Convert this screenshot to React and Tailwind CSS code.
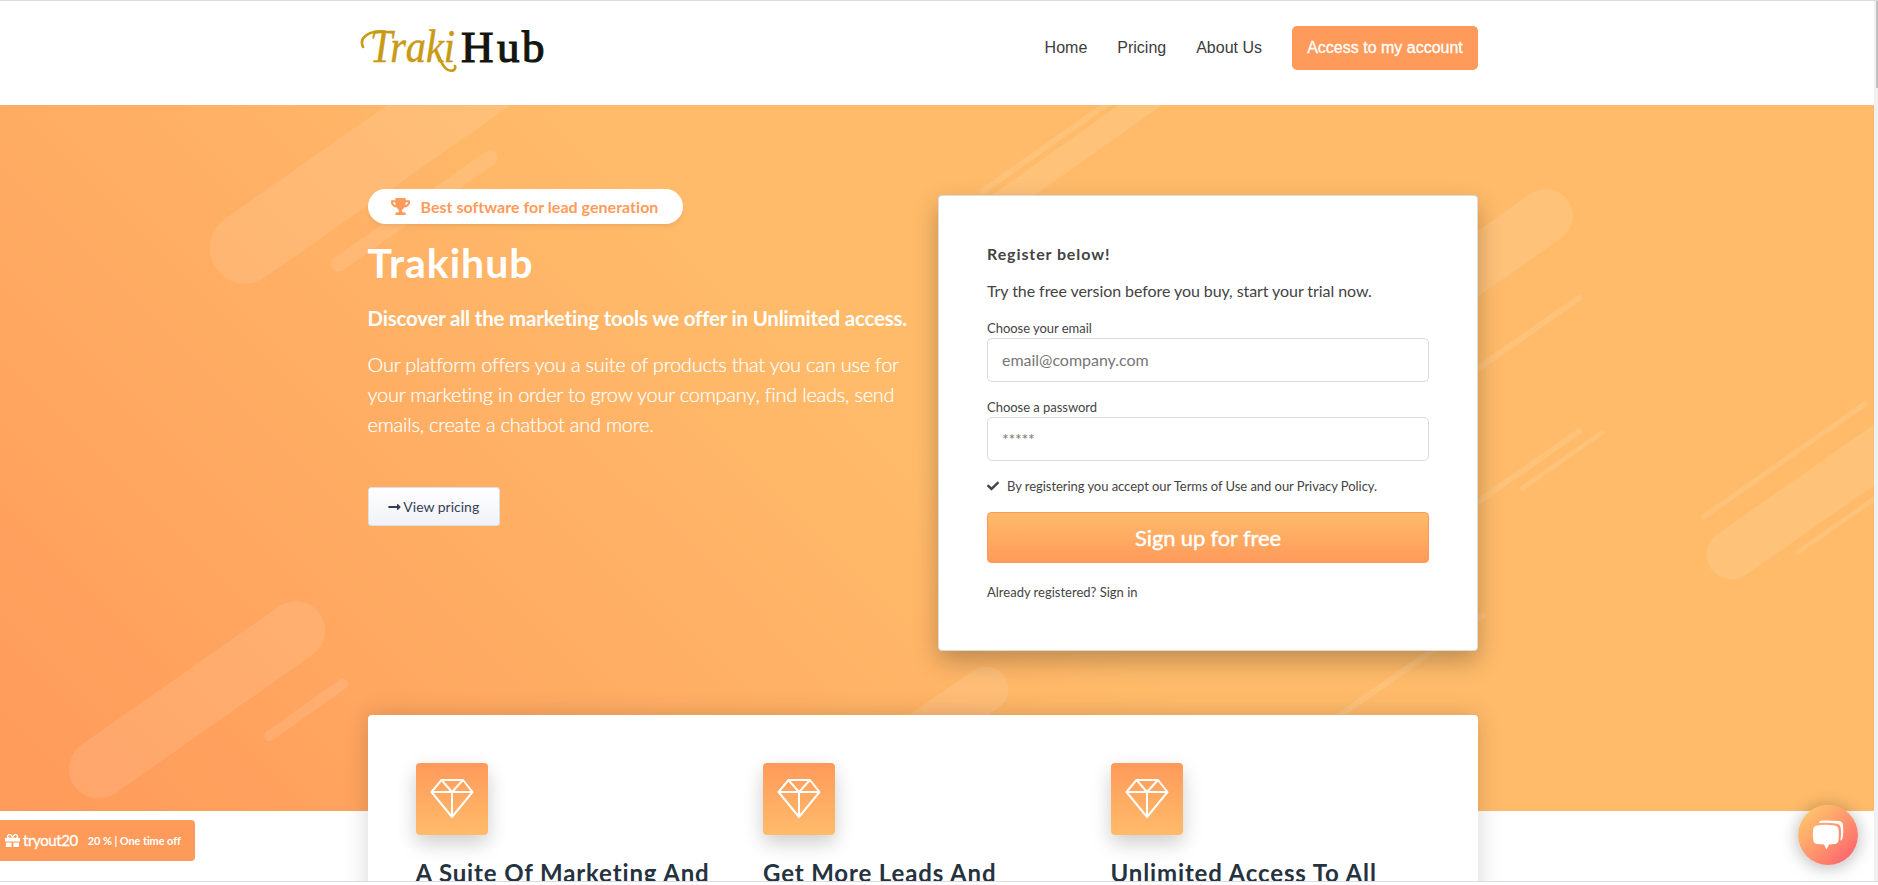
import { FaCheck, FaGift, FaLongArrowAltRight, FaTrophy } from "react-icons/fa"

const links = ["Home", "Pricing", "About Us"]

const features = ["A Suite Of Marketing And", "Get More Leads And", "Unlimited Access To All"]

// x1, y1, x2, y2, thickness
const stripes = [
    [245, 143, 655, -144, 71],
    [338.5, 159, 490, 53, 15],
    [98.5, 664, 295.7, 525.7, 59],
    [269.5, 631, 342.7, 579, 10.5],
    [983, 86, 1128, -16, 6],
    [960, 128, 1180, -28, 25],
    [1300, 283, 1546, 111, 54],
    [1400, 318, 1579, 193, 6],
    [1400, 451, 1579, 326.5, 6],
    [1522.5, 383, 1602, 327.5, 5],
    [1703.5, 412, 1865, 298.7, 5.5],
    [1731.5, 449.5, 1920, 318, 50],
    [1798, 447, 1920, 362, 5],
    [1300, 638, 1483, 510.5, 6],
    [860, 672, 986, 584, 45],
]

function Logo() {
    return (
        <svg width="194" height="76" viewBox="0 -12 194 76" className="-ml-[9px] mt-[8px]">
            <text
                x="11"
                y="41"
                textLength="85"
                lengthAdjust="spacingAndGlyphs"
                fontFamily="'Liberation Serif', serif"
                fontStyle="italic"
                fontSize="47"
                fill="#c99a14"
                stroke="#c99a14"
                strokeWidth="0.5"
            >
                Traki
            </text>
            <path
                d="M26 10.500C13 9 -1 15 4 26M80 36C84 46 89 52 95 49Q97 47 96 45"
                fill="none"
                stroke="#c99a14"
                strokeWidth="2.6"
                strokeLinecap="round"
            />
            <text
                y="41"
                fontFamily="'Liberation Serif', serif"
                fontSize="45"
                fill="#14150f"
                stroke="#14150f"
                strokeWidth="1.2"
            >
                <tspan x="102">H</tspan>
                <tspan x="138">u</tspan>
                <tspan x="163">b</tspan>
            </text>
        </svg>
    )
}

function Header() {
    return (
        <header className="flex h-[104px] shrink-0 items-start justify-between bg-white pl-[368px] pr-[396px]">
            <Logo />
            <nav className="mt-[25px] flex items-center gap-[30px] font-['Liberation_Sans',sans-serif] text-base text-[#3c3c3c]">
                {links.map((link) => (
                    <a key={link}>{link}</a>
                ))}
                <a className="flex h-[44px] w-[186px] items-center justify-center whitespace-nowrap rounded-[5px] bg-[#ff9b5a] text-white [-webkit-text-stroke:0.3px_white]">
                    Access to my account
                </a>
            </nav>
        </header>
    )
}

function Stripes() {
    return (
        <svg className="absolute inset-0" width="1874" height="706" viewBox="0 0 1874 706">
            {stripes.map(([x1, y1, x2, y2, w], i) => (
                <line
                    key={i}
                    x1={x1}
                    y1={y1}
                    x2={x2}
                    y2={y2}
                    stroke="#fff"
                    strokeOpacity="0.1"
                    strokeWidth={w}
                    strokeLinecap="round"
                />
            ))}
        </svg>
    )
}

function Intro() {
    return (
        <div className="w-[570.5px] pt-[84px] text-white">
            <div className="flex h-[35px] w-[315px] items-center rounded-[18px] bg-white pl-[23px] text-base font-bold tracking-[0.03px] text-[#ff9b5a] shadow-md shadow-black/5">
                <FaTrophy className="mr-[11px] h-[17px] w-[19px]" />
                <span className="whitespace-nowrap">Best software for lead generation</span>
            </div>
            <h1 className="mt-[14px] text-[41px] font-bold leading-[50px] tracking-[1px]">Trakihub</h1>
            <h2 className="mt-[15px] whitespace-nowrap text-[20.5px] font-bold leading-[30px] tracking-[-0.21px]">
                Discover all the marketing tools we offer in Unlimited access.
            </h2>
            <p className="mt-[16px] whitespace-nowrap text-[20px] font-light leading-[30px] tracking-[-0.24px] [-webkit-text-stroke:0.2px_white]">
                Our platform offers you a suite of products that you can use for
                <br />
                your marketing in order to grow your company, find leads, send
                <br />
                emails, create a chatbot and more.
            </p>
            <button className="mt-[48px] flex h-[39px] w-[132.5px] items-center justify-center rounded-[3px] border border-[#dcdfe6] bg-linear-to-b from-white to-[#f1f2f7] text-[14px] text-[#343f56]">
                <FaLongArrowAltRight className="mr-[2px] h-[14px] w-[13px]" />
                View pricing
            </button>
        </div>
    )
}

function Register() {
    return (
        <form className="mt-[90px] h-[456px] w-[540px] rounded-[4px] border border-[#dcdcdc] bg-white px-[48px] pt-[46px] text-[#444] shadow-[0_10px_24px_rgba(0,0,0,0.25)]">
            <h3 className="text-base font-bold leading-[24px] tracking-[0.9px]">Register below!</h3>
            <p className="mt-[13px] text-base leading-[24px] tracking-[-0.07px]">
                Try the free version before you buy, start your trial now.
            </p>
            <label className="mt-[16px] block text-[13px] leading-[18px] tracking-[-0.03px]">Choose your email</label>
            <input
                className="mt-px block h-[44px] w-[442px] rounded-[5px] border border-[#dcdcdc] px-[14px] pb-[2px] text-base tracking-[-0.03px] placeholder:text-[#777]"
                placeholder="email@company.com"
            />
            <label className="mt-[16px] block text-[13px] leading-[18px] tracking-[-0.03px]">Choose a password</label>
            <input
                className="mt-px block h-[44px] w-[442px] rounded-[5px] border border-[#dcdcdc] px-[14px] pb-[2px] text-base tracking-[-0.3px] placeholder:text-[#777]"
                placeholder="*****"
            />
            <p className="mt-[16px] flex items-center text-[13px] leading-[18px] tracking-[-0.05px]">
                <FaCheck className="mr-[8px] h-[12px] w-[12px]" />
                By registering you accept our Terms of Use and our Privacy Policy.
            </p>
            <button className="mt-[17px] h-[51px] w-[442px] rounded-[4px] border border-[#ff9b5a] bg-linear-to-b from-[#ffbb6a] to-[#ff9a5a] text-[22px] tracking-[-0.15px] text-white [-webkit-text-stroke:0.4px_white]">
                Sign up for free
            </button>
            <p className="mt-[20px] text-[13px] leading-[18px]">Already registered? Sign in</p>
        </form>
    )
}

function Diamond() {
    return (
        <svg width="44" height="42" viewBox="0 0 44 42" fill="none" stroke="#fff" strokeWidth="2" strokeLinejoin="round">
            <path d="M11.5 3H33L42.5 15L22 40L1.5 15ZM1.5 15H42.5M11.5 3L22 15L33 3M22 15V40" />
        </svg>
    )
}

function Features() {
    return (
        <section className="relative ml-[367.5px] -mt-[96px] grid h-[400px] w-[1110px] shrink-0 grid-cols-[318px_318px_318px] gap-[29.5px] rounded-[4px] bg-white px-[48px] pt-[48px] shadow-[0_0_24px_rgba(0,0,0,0.17)]">
            {features.map((title) => (
                <div key={title}>
                    <div className="flex h-[72px] w-[72px] justify-center rounded-[4px] bg-linear-to-b from-[#ff9a5a] to-[#ffbb6a] pt-[14px] shadow-[0_8px_20px_rgba(0,0,0,0.2)]">
                        <Diamond />
                    </div>
                    <h3 className="mt-[22px] whitespace-nowrap text-[24px] font-bold leading-[32px] tracking-[0.86px] text-[#253240]">
                        {title}
                    </h3>
                </div>
            ))}
        </section>
    )
}

function ChatButton() {
    return (
        <button className="absolute left-[1798px] top-[804px] flex h-[60px] w-[60px] items-center justify-center rounded-full bg-linear-to-br from-[#ffc06c] from-15% to-[#ff6a6c] to-85% shadow-[0_2px_18px_rgba(0,0,0,0.3)]">
            <svg width="32" height="30" viewBox="0 0 32 30" fill="#fff">
                <path d="M5 5.5Q14 4 23 5.5Q26.300 6 26.600 9.500Q27.200 14.500 26.600 20Q26.200 23.500 23 24L17 24.500L14.500 29.500L12 24.500L5 24Q1.500 23.500 1.200 20Q.6 14.500 1.200 9.500Q1.600 6 5 5.500Z" />
                <path d="M7 3Q7 .8 10 .6Q18 0 27 1Q30.500 1.500 31 5Q31.800 12 30.500 18.500Q30 20.500 28.500 20.500Q29.400 14 28.700 8Q28.300 4.200 25 3.700Q16 2.400 7 3Z" />
            </svg>
        </button>
    )
}

export default function App() {
    return (
        <div className="flex h-[885px] w-[1878px] flex-col overflow-hidden bg-white font-['Lato',sans-serif]">
            <div className="relative flex h-[882px] shrink-0 overflow-hidden border-y border-[#dadbe0]">
                <main className="flex w-[1874px] flex-col">
                    <Header />
                    <div className="relative flex h-[706px] shrink-0 overflow-hidden bg-[linear-gradient(45deg,#ff9a5a_0%,#ffbb6a_50%)] pl-[367.5px]">
                        <Stripes />
                        <div className="relative flex items-start">
                            <Intro />
                            <Register />
                        </div>
                    </div>
                    <Features />
                </main>
                <div className="flex w-[4px] justify-end bg-[#f1f1f1]">
                    <div className="h-[87px] w-[2px] bg-[#c1c1c1]"></div>
                </div>
                <div className="absolute left-0 top-[819px] flex h-[41px] w-[195px] items-center whitespace-nowrap rounded-r-[4px] bg-[#ff9b5a] pl-[5px] text-white">
                    <FaGift className="mr-[3px] h-[15px] w-[15px]" />
                    <span className="text-[15px] tracking-[-0.4px] [-webkit-text-stroke:0.3px_white]">tryout20</span>
                    <span className="ml-[10px] pt-[2px] text-[11px] font-bold tracking-[-0.1px]">20 % | One time off</span>
                </div>
                <ChatButton />
            </div>
        </div>
    )
}
